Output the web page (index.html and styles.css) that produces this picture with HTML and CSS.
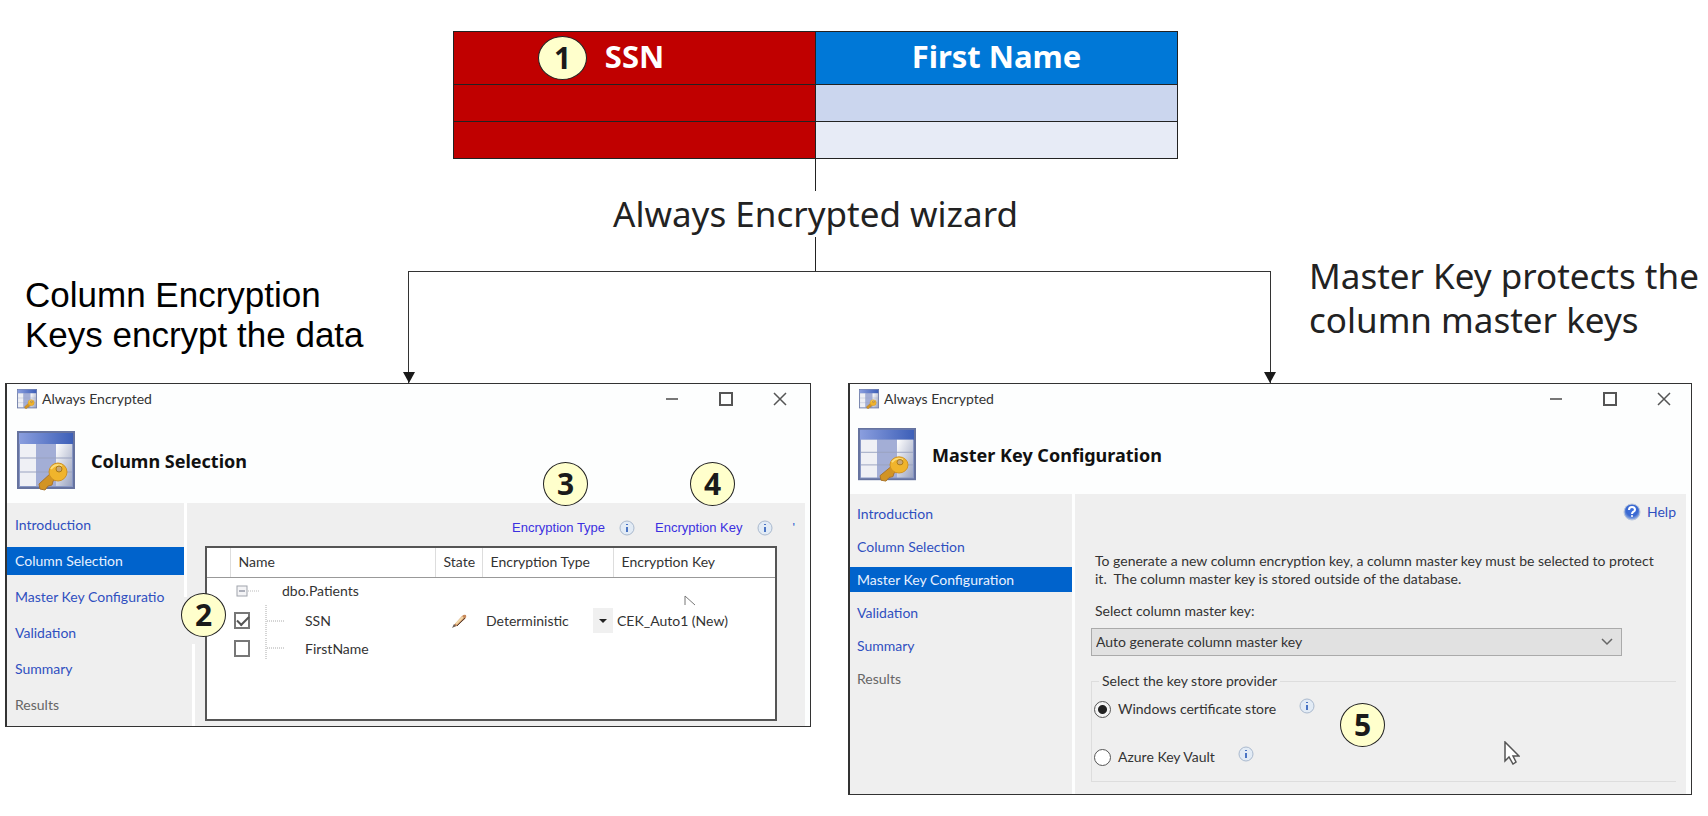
FILE: index.html
```html
<!DOCTYPE html>
<html lang="en">
<head>
    <meta charset="UTF-8">
    <meta name="viewport" content="width=device-width, initial-scale=1.0">
    <title>Always Encrypted</title>
    <link rel="stylesheet" href="styles.css">
</head>
<body>
<!-- Shared icons -->
<svg class="sprite" aria-hidden="true">
    <defs>
        <linearGradient id="bar-fill" x1="0" x2="1" y1="0" y2="0">
            <stop offset="0" stop-color="#8a9ede"/>
            <stop offset="1" stop-color="#3d5fb8"/>
        </linearGradient>
        <linearGradient id="cell-fill" x1="0" x2="1" y1="0" y2="1">
            <stop offset="0" stop-color="#ffffff"/>
            <stop offset="1" stop-color="#9aa3c0"/>
        </linearGradient>
        <radialGradient id="help-fill" cx="0.5" cy="0.4" r="0.6">
            <stop offset="0" stop-color="#3a6ee0"/>
            <stop offset="0.6" stop-color="#3a68d0"/>
            <stop offset="1" stop-color="#a9bfe6"/>
        </radialGradient>
    </defs>
    <symbol id="icon-table-key" viewBox="0 0 58 60" preserveAspectRatio="none">
        <rect x="1" y="1" width="56" height="56" fill="#8796c4" stroke="#66739f" stroke-width="2"/>
        <rect x="2" y="2" width="54" height="11" fill="url(#bar-fill)"/>
        <rect x="3" y="13" width="16" height="42" fill="#eff0f5"/>
        <rect x="19" y="13" width="20" height="42" fill="#a3aed6"/>
        <rect x="39" y="13" width="16" height="42" fill="url(#cell-fill)"/>
        <path d="M3 27H55M3 41H55" stroke="#99a2c0" stroke-width="1"/>
        <path d="M34 42L22 53L23 58L28 59L31 55L35 54L36 50L41 47Z" fill="#d29424" stroke="#a9742a" stroke-width="1"/>
        <circle cx="41" cy="41" r="9" fill="#f0b42c" stroke="#cf9122" stroke-width="1"/>
        <path d="M34 38Q38 32 45 35" stroke="#fbdc78" stroke-width="2" fill="none"/>
        <circle cx="42" cy="38" r="3" fill="#c9a878" stroke="#a87818" stroke-width="1"/>
    </symbol>
    <symbol id="icon-info" viewBox="0 0 16 16">
        <circle cx="8" cy="8" r="7" fill="#e2ebf5" stroke="#aab9ce" stroke-width="1"/>
        <path d="M8 4V5M8 7V12" stroke="#4a74c4" stroke-width="2" fill="none"/>
    </symbol>
    <symbol id="icon-help" viewBox="0 0 18 18">
        <circle cx="9" cy="9" r="8" fill="url(#help-fill)" stroke="#b9c6dc" stroke-width="1"/>
        <path d="M6 7Q6 4 9 4Q12 4 12 7Q12 8 10 9Q9 10 9 11" stroke="#fff" stroke-width="2" fill="none"/>
        <circle cx="9" cy="13" r="1" fill="#fff"/>
    </symbol>
    <symbol id="icon-min" viewBox="0 0 14 14">
        <path d="M1 7H13" stroke="#777" stroke-width="2"/>
    </symbol>
    <symbol id="icon-max" viewBox="0 0 14 14">
        <rect x="1" y="1" width="12" height="12" fill="none" stroke="#555" stroke-width="2"/>
    </symbol>
    <symbol id="icon-close" viewBox="0 0 14 14">
        <path d="M1 1L13 13M13 1L1 13" stroke="#555" stroke-width="1.5"/>
    </symbol>
</svg>

<main class="diagram">
    <section class="source">
        <table class="source-table">
            <thead>
                <tr>
                    <th class="ssn"><span class="badge badge-1">1</span>SSN</th>
                    <th class="first-name">First Name</th>
                </tr>
            </thead>
            <tbody>
                <tr><td class="ssn"></td><td class="tint"></td></tr>
                <tr><td class="ssn"></td><td class="tint-light"></td></tr>
            </tbody>
        </table>
        <div class="stem"></div>
        <h1 class="wizard-label">Always Encrypted wizard</h1>
    </section>

    <section class="branch">
        <p class="branch-label branch-label-left">Column Encryption<br>Keys encrypt the data</p>
        <div class="connector">
            <div class="connector-stem"></div>
            <div class="arm arm-left"></div>
            <div class="arm arm-right"></div>
        </div>
        <p class="branch-label branch-label-right">Master Key protects the<br>column master keys</p>
    </section>

    <section class="windows">
        <!-- Column Selection -->
        <article class="window window-columns">
            <header class="titlebar">
                <svg class="titlebar-icon"><use href="#icon-table-key"/></svg>
                <span class="titlebar-text">Always Encrypted</span>
                <button type="button" class="win-btn" aria-label="Minimize"><svg><use href="#icon-min"/></svg></button>
                <button type="button" class="win-btn" aria-label="Maximize"><svg><use href="#icon-max"/></svg></button>
                <button type="button" class="win-btn" aria-label="Close"><svg><use href="#icon-close"/></svg></button>
            </header>
            <div class="page-head">
                <svg class="page-icon"><use href="#icon-table-key"/></svg>
                <h2>Column Selection</h2>
            </div>
            <div class="window-body">
                <nav class="steps">
                    <a href="#introduction">Introduction</a>
                    <a href="#column-selection" class="current">Column Selection</a>
                    <a href="#master-key">Master Key Configuratio</a>
                    <a href="#validation">Validation</a>
                    <a href="#summary">Summary</a>
                    <a href="#results" class="disabled">Results</a>
                </nav>
                <div class="divider"><i></i><i></i></div>
                <div class="content">
                    <div class="hints">
                        <a href="#type">Encryption Type</a>
                        <svg class="info"><use href="#icon-info"/></svg>
                        <a href="#key">Encryption Key</a>
                        <svg class="info"><use href="#icon-info"/></svg>
                        <span class="hint-mark">'</span>
                    </div>
                    <div class="grid-box">
                        <table class="columns-table">
                            <colgroup>
                                <col class="col-gutter"><col class="col-name"><col class="col-state"><col class="col-type"><col>
                            </colgroup>
                            <thead>
                                <tr><th></th><th>Name</th><th>State</th><th>Encryption Type</th><th>Encryption Key</th></tr>
                            </thead>
                            <tbody>
                                <tr>
                                    <td></td>
                                    <td>
                                        <div class="tree">
                                            <svg class="tree-lines" viewBox="0 0 46 26">
                                                <rect x="3" y="8" width="10" height="10" fill="#f4f4f6" stroke="#a0a4ac"/>
                                                <path d="M5 13H11" stroke="#666d80"/>
                                                <path d="M14 13H26" stroke="#bbb" stroke-dasharray="1 1"/>
                                            </svg>
                                            dbo.Patients
                                        </div>
                                    </td>
                                    <td></td><td></td><td></td>
                                </tr>
                                <tr class="row-ssn">
                                    <td></td>
                                    <td>
                                        <div class="tree">
                                            <input type="checkbox" id="col-ssn" checked>
                                            <svg class="branch-lines" viewBox="0 0 20 32">
                                                <path d="M1 0V32M2 16H19" stroke="#aaa" stroke-dasharray="1 1"/>
                                            </svg>
                                            <label for="col-ssn">SSN</label>
                                        </div>
                                    </td>
                                    <td>
                                        <svg class="pencil" viewBox="0 0 16 16">
                                            <path d="M3 12L11 3Q13 1 15 2Q16 4 14 6L6 13L2 14Z" fill="#c88a5c"/>
                                            <path d="M5 11L12 4" stroke="#f3d9a8" stroke-width="2"/>
                                            <path d="M6 13L14 5" stroke="#54453c"/>
                                            <path d="M1 15L5 13L3 11Z" fill="#6a6058"/>
                                        </svg>
                                    </td>
                                    <td>
                                        <div class="type-select">
                                            <select aria-label="Encryption type for SSN">
                                                <option>Deterministic</option>
                                            </select>
                                        </div>
                                    </td>
                                    <td>CEK_Auto1 (New)</td>
                                </tr>
                                <tr class="row-last">
                                    <td></td>
                                    <td>
                                        <div class="tree">
                                            <input type="checkbox" id="col-first">
                                            <svg class="branch-lines branch-lines-last" viewBox="0 0 20 22">
                                                <path d="M1 0V22M2 10H19" stroke="#aaa" stroke-dasharray="1 1"/>
                                            </svg>
                                            <label for="col-first">FirstName</label>
                                        </div>
                                    </td>
                                    <td></td><td></td><td></td>
                                </tr>
                            </tbody>
                        </table>
                        <svg class="cursor-ghost" viewBox="0 0 12 12"><path d="M1 10V1L11 10" stroke="#777" fill="none"/></svg>
                    </div>
                </div>
            </div>
            <span class="badge badge-2">2</span>
            <span class="badge badge-3">3</span>
            <span class="badge badge-4">4</span>
        </article>

        <!-- Master Key Configuration -->
        <article class="window window-master">
            <header class="titlebar">
                <svg class="titlebar-icon"><use href="#icon-table-key"/></svg>
                <span class="titlebar-text">Always Encrypted</span>
                <button type="button" class="win-btn" aria-label="Minimize"><svg><use href="#icon-min"/></svg></button>
                <button type="button" class="win-btn" aria-label="Maximize"><svg><use href="#icon-max"/></svg></button>
                <button type="button" class="win-btn" aria-label="Close"><svg><use href="#icon-close"/></svg></button>
            </header>
            <div class="page-head">
                <svg class="page-icon"><use href="#icon-table-key"/></svg>
                <h2>Master Key Configuration</h2>
            </div>
            <div class="window-body">
                <nav class="steps">
                    <a href="#introduction">Introduction</a>
                    <a href="#column-selection">Column Selection</a>
                    <a href="#master-key" class="current">Master Key Configuration</a>
                    <a href="#validation">Validation</a>
                    <a href="#summary">Summary</a>
                    <a href="#results" class="disabled">Results</a>
                </nav>
                <form class="content">
                    <a href="#help" class="help"><svg><use href="#icon-help"/></svg>Help</a>
                    <p class="intro">To generate a new column encryption key, a column master key must be selected to protect it.&nbsp; The column master key is stored outside of the database.</p>
                    <label class="select-label" for="master-key-select">Select column master key:</label>
                    <div class="key-select">
                        <select id="master-key-select">
                            <option>Auto generate column master key</option>
                        </select>
                        <svg viewBox="0 0 12 8"><path d="M1 1L6 6L11 1" stroke="#666" stroke-width="1.5" fill="none"/></svg>
                    </div>
                    <fieldset class="provider">
                        <legend>Select the key store provider</legend>
                        <div class="option">
                            <input type="radio" name="provider" id="cert-store" checked>
                            <label for="cert-store">Windows certificate store</label>
                            <svg class="info"><use href="#icon-info"/></svg>
                        </div>
                        <div class="option">
                            <input type="radio" name="provider" id="key-vault">
                            <label for="key-vault">Azure Key Vault</label>
                            <svg class="info"><use href="#icon-info"/></svg>
                        </div>
                    </fieldset>
                </form>
            </div>
            <span class="badge badge-5">5</span>
            <svg class="cursor" viewBox="0 0 16 24"><path d="M1 1V20L5 16L9 23L12 21L9 15H15Z" fill="#fff" stroke="#555" stroke-width="1.5"/></svg>
        </article>
    </section>
</main>
</body>
</html>
```
FILE: styles.css
```css
* {
    box-sizing: border-box;
}

body {
    margin: 0;
    background-color: #fff;
    color: #222;
    font-family: "Noto Sans", "Open Sans", sans-serif;
}

.sprite {
    position: absolute;
    width: 0;
    height: 0;
}

.diagram {
    padding-top: 31px;
}

/* Source table at the top */
.source {
    padding: 0 530px 0 453px;
}

.source-table {
    width: 100%;
    table-layout: fixed;
    border-collapse: collapse;
}

.source-table th,
.source-table td {
    border: 1px solid #222;
    padding: 0;
    height: 37px;
}

.source-table th {
    position: relative;
    height: 53px;
    padding-bottom: 5px;
    color: #fff;
    font-size: 31px;
    line-height: 40px;
    font-weight: bold;
}

.source-table .ssn {
    background-color: #c00000;
}

.source-table .first-name {
    background-color: #0078d7;
}

.source-table .tint {
    background-color: #cbd6ee;
}

.source-table .tint-light {
    background-color: #e7ebf6;
}

.stem {
    width: 1px;
    height: 32px;
    margin: 0 auto;
    background-color: #222;
}

.wizard-label {
    margin: 0;
    font-size: 35px;
    line-height: 46px;
    font-weight: normal;
    text-align: center;
    white-space: nowrap;
}

/* Connector lines */
.branch {
    display: grid;
    grid-template-columns: 408px 1fr 437px;
}

.branch-label {
    margin: 0;
    white-space: nowrap;
}

.branch-label-left {
    padding: 38px 0 0 25px;
    color: #000;
    font-family: "Liberation Sans", Arial, sans-serif;
    font-size: 35px;
    line-height: 40px;
}

.branch-label-right {
    padding: 17px 0 0 38px;
    font-size: 35px;
    line-height: 44px;
}

.connector {
    display: grid;
    grid-template-columns: 408fr 455fr;
    grid-template-rows: 34px 112px;
}

.connector-stem {
    grid-column: 1 / 2;
    border-right: 1px solid #222;
}

.arm {
    position: relative;
    grid-row: 2;
    border-top: 1px solid #333;
}

.arm-left {
    border-left: 1px solid #333;
}

.arm-right {
    border-right: 1px solid #333;
}

.arm::after {
    content: "";
    position: absolute;
    bottom: 0;
    border: 6px solid transparent;
    border-top: 11px solid #1a1a1a;
    border-bottom: 0;
}

.arm-left::after {
    left: -6px;
}

.arm-right::after {
    right: -6px;
}

/* Wizard windows */
.windows {
    display: grid;
    grid-template-columns: minmax(0, 806fr) minmax(0, 844fr);
    gap: 37px;
    align-items: start;
    padding: 0 16px 20px 5px;
}

.window {
    position: relative;
    border: 1px solid #333;
    border-left-width: 2px;
    background-color: #fdfefe;
    color: #333;
    font-family: Lato, "Open Sans", sans-serif;
    font-size: 14px;
    line-height: 18px;
}

.titlebar {
    display: flex;
    align-items: center;
    height: 30px;
    padding: 0 15px 0 10px;
}

.titlebar-icon {
    width: 20px;
    height: 20px;
}

.titlebar-text {
    flex: 1;
    padding-left: 5px;
}

.win-btn {
    display: flex;
    padding: 0;
    margin: 0 8px 0 32px;
    border: none;
    background: none;
}

.win-btn svg {
    width: 14px;
    height: 14px;
}

.page-head {
    display: flex;
    align-items: center;
    height: 89px;
    padding: 5px 0 0 10px;
}

.page-icon {
    width: 58px;
    height: 60px;
}

.page-head h2 {
    margin: 0;
    padding-left: 16px;
    color: #111;
    font-family: "Noto Sans", sans-serif;
    font-size: 18px;
    line-height: 24px;
}

.window-body {
    display: flex;
    margin-right: 5px;
    background-color: #efefef;
}

.steps {
    display: flex;
    flex-direction: column;
    flex: none;
    width: 177px;
    padding: 8px 0 5px;
    gap: 8px;
}

.steps a {
    padding: 5px 8px;
    color: #2f4fc0;
    text-decoration: none;
    white-space: nowrap;
}

.steps .current {
    background-color: #0063cc;
    color: #e8f1ff;
}

.steps .disabled {
    color: #666;
}

.divider {
    display: flex;
    flex-direction: column;
    justify-content: space-between;
    width: 11px;
}

.divider i {
    width: 3px;
    height: 94px;
    background-color: #fff;
}

.divider i:last-child {
    height: 82px;
    align-self: flex-end;
}

.content {
    flex: 1;
    min-width: 0;
}

.window-columns .content {
    padding: 14px 28px 5px 10px;
}

.hints {
    display: flex;
    align-items: center;
    justify-content: flex-end;
    height: 22px;
    margin: 0 -18px 7px 0;
    font-family: "Liberation Sans", Arial, sans-serif;
    font-size: 13px;
}

.hints a {
    color: #3b30e0;
    text-decoration: none;
}

.info {
    width: 16px;
    height: 16px;
}

.hints .info {
    margin: 0 20px 0 14px;
}

.hint-mark {
    color: #2b5fd0;
}

/* Column list */
.grid-box {
    position: relative;
    height: 175px;
    border: 2px solid #555;
    background-color: #fff;
}

.columns-table {
    width: 100%;
    table-layout: fixed;
    border-collapse: collapse;
}

.col-gutter {
    width: 23px;
}

.col-name {
    width: 205px;
}

.col-state {
    width: 47px;
}

.col-type {
    width: 131px;
}

.columns-table th {
    height: 29px;
    padding: 0 0 0 8px;
    border-bottom: 1px solid #999;
    border-left: 1px solid #ddd;
    font-weight: normal;
    text-align: left;
    white-space: nowrap;
}

.columns-table th:first-child {
    border-left: none;
}

.columns-table td {
    height: 26px;
    padding: 0 0 0 4px;
}

.columns-table .row-ssn td {
    height: 34px;
}

.columns-table .row-last td {
    height: 22px;
}

.tree {
    display: flex;
    align-items: center;
}

.tree-lines {
    width: 46px;
    height: 26px;
    margin-right: 2px;
}

.tree input {
    appearance: none;
    width: 16px;
    height: 17px;
    margin: 0;
    border: 2px solid #777;
    background-color: #fff;
}

.tree input:checked::after {
    content: "";
    display: block;
    width: 10px;
    height: 5px;
    margin: 2px 0 0 1px;
    border: solid #555;
    border-width: 0 0 2px 2px;
    transform: rotate(-45deg);
}

.branch-lines {
    width: 20px;
    height: 32px;
    margin: 0 20px 0 15px;
}

.branch-lines-last {
    height: 22px;
}

.pencil {
    display: block;
    width: 16px;
    height: 16px;
    margin-left: 12px;
}

.type-select {
    position: relative;
}

.type-select::after {
    content: "";
    position: absolute;
    top: 11px;
    right: 6px;
    border: 4px solid transparent;
    border-top-color: #222;
    border-bottom: 0;
    pointer-events: none;
}

.type-select select {
    appearance: none;
    display: block;
    width: 100%;
    height: 25px;
    padding: 0;
    border: none;
    background: linear-gradient(#f0f0f0, #f0f0f0) right / 20px 100% no-repeat;
    color: inherit;
    font: inherit;
}

.cursor-ghost {
    position: absolute;
    left: 477px;
    top: 47px;
    width: 12px;
    height: 12px;
}

/* Master key page */
.window-master .titlebar {
    padding: 0 12px 0 9px;
}

.window-master .page-head {
    height: 80px;
    padding: 1px 0 0 8px;
}

.window-master .page-icon {
    height: 54px;
}

.window-master .steps {
    width: 225px;
    border-right: 3px solid #fdfefe;
    padding-top: 7px;
    padding-bottom: 90px;
}

.window-master .steps a {
    padding: 4px 7px;
    height: 25px;
}

.window-master .content {
    padding: 9px 10px 12px 16px;
}

.help {
    display: flex;
    align-items: center;
    justify-content: flex-end;
    gap: 6px;
    color: #2f4fc0;
    text-decoration: none;
}

.help svg {
    width: 18px;
    height: 18px;
}

.intro {
    margin: 31px 0 0;
    padding: 0 8px 0 4px;
}

.select-label {
    display: block;
    margin: 14px 0 8px;
    padding-left: 4px;
}

.key-select {
    position: relative;
    margin-right: 54px;
}

.key-select select {
    appearance: none;
    display: block;
    width: 100%;
    height: 28px;
    padding: 0 4px;
    border: 1px solid #aaa;
    background-color: #e1e1e1;
    color: inherit;
    font: inherit;
}

.key-select svg {
    position: absolute;
    right: 9px;
    top: 10px;
    width: 12px;
    height: 8px;
    pointer-events: none;
}

.provider {
    margin: 16px 0 0;
    padding: 8px 0 13px 2px;
    border: 1px solid #ddd;
    border-right: none;
}

.provider legend {
    margin-left: 5px;
    padding: 0 3px;
}

.option {
    display: flex;
    align-items: center;
    height: 22px;
}

.option + .option {
    margin-top: 26px;
}

.option input {
    appearance: none;
    width: 17px;
    height: 17px;
    margin: 0 7px 0 0;
    border: 1px solid #555;
    border-radius: 50%;
    background-color: #fff;
}

.option input:checked {
    background: radial-gradient(circle, #222 4px, #f4f4f4 5px);
}

.option .info {
    margin: 0 0 6px 23px;
}

.cursor {
    position: absolute;
    left: 654px;
    top: 357px;
    width: 16px;
    height: 24px;
}

/* Numbered callouts */
.badge {
    position: absolute;
    width: 45px;
    height: 44px;
    border: 1px solid #222;
    border-radius: 50%;
    background-color: #ffffcc;
    color: #1a1a1a;
    font-family: "Noto Sans", sans-serif;
    font-size: 30px;
    font-weight: bold;
    line-height: 42px;
    text-align: center;
}

.badge-1 {
    left: 84px;
    top: 4px;
    width: 49px;
}

.badge-2 {
    left: 174px;
    top: 209px;
}

.badge-3 {
    left: 536px;
    top: 78px;
}

.badge-4 {
    left: 683px;
    top: 78px;
}

.badge-5 {
    left: 490px;
    top: 319px;
}
```
